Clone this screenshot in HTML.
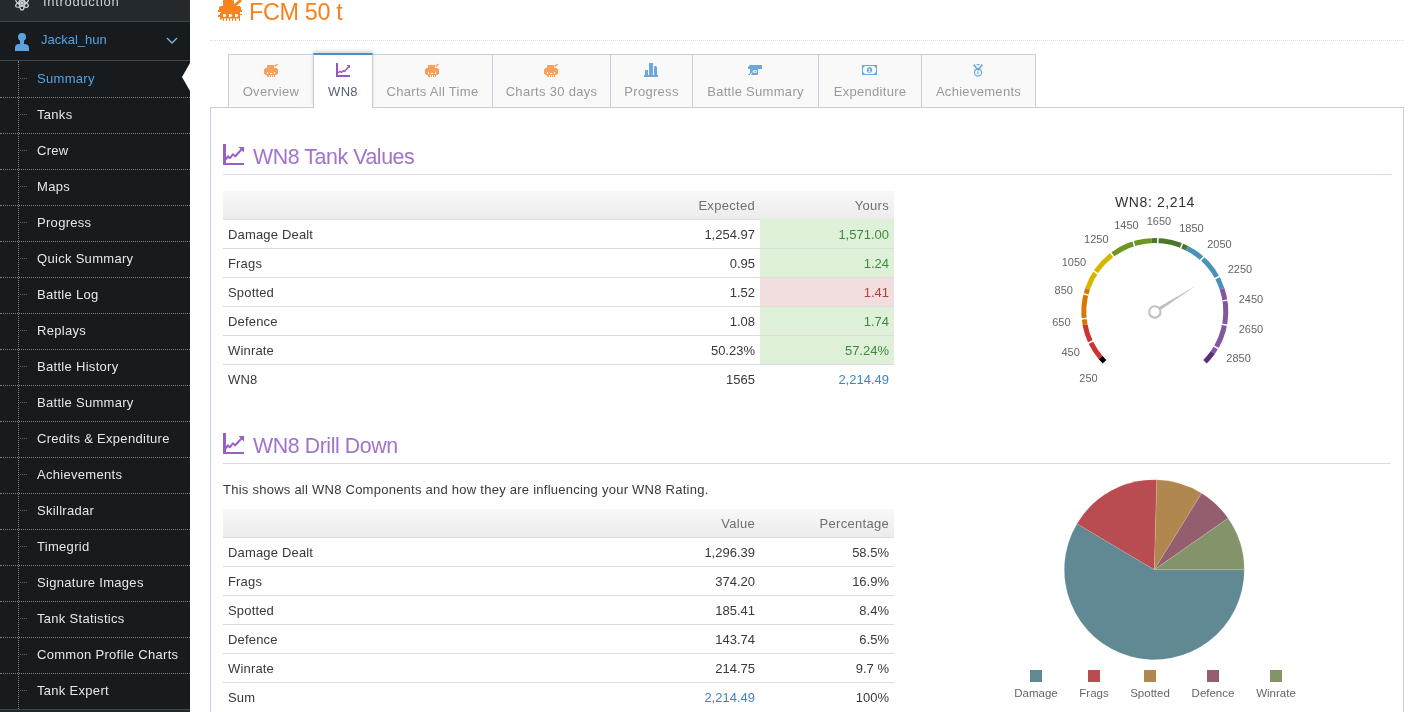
<!DOCTYPE html><html><head><meta charset="utf-8"><style>
*{box-sizing:border-box;margin:0;padding:0}
html,body{width:1422px;height:712px;overflow:hidden;background:#fff;font-family:"Liberation Sans",sans-serif;font-size:13px;color:#393939}
.t{position:absolute;white-space:nowrap;line-height:16px}
#sb{position:absolute;left:0;top:0;width:190px;height:712px;background:#171b1d;overflow:hidden}
#sb .t{color:#e6e6e6;letter-spacing:0.3px}
.sdot{position:absolute;left:0;width:190px;height:1px;border-top:1px dotted #74838a}
.tab{position:absolute;top:54px;height:54px;background:#f9f9f9;border:1px solid #c5d0dc;color:#999}
.tab .lbl{position:absolute;left:0;right:0;text-align:center;top:29px;line-height:16px;white-space:nowrap;letter-spacing:0.3px}

.tab.active{background:#fff;border-top:2px solid #4c8fbd;top:53px;height:55px;border-bottom:0;color:#576373;box-shadow:0 -2px 3px rgba(0,0,0,0.15);z-index:2}
.box{position:absolute;left:210px;top:107px;width:1194px;height:640px;border:1px solid #c5d0dc;background:#fff;z-index:1}
.z{z-index:3}
.hul{position:absolute;left:223px;width:1168px;height:1px;background:#e2d6ea;z-index:3}
.htxt{position:absolute;left:253px;font-size:21.4px;letter-spacing:-0.45px;color:#a173cb;white-space:nowrap;line-height:24px;z-index:3}
.th{position:absolute;left:223px;width:671px;height:29px;background:linear-gradient(#f8f8f8,#ececec);border-bottom:1px solid #ddd;z-index:3}
.rl{position:absolute;left:223px;width:671px;height:1px;background:#ddd;z-index:4}
.cell{position:absolute;z-index:3}
.r{text-align:right}
</style></head><body><div id="wrap" style="position:absolute;left:0;top:0;width:1422px;height:712px;overflow:hidden;will-change:transform">
<div id="sb">
<div style="position:absolute;left:0;top:0;width:190px;height:21px;background:#23292c"></div>
<div style="position:absolute;left:0;top:21px;width:190px;height:1px;background:#3b484d"></div>
<div style="position:absolute;left:0;top:60px;width:190px;height:1px;background:#3b484d"></div>
<div style="position:absolute;left:0;top:709px;width:190px;height:1px;background:#3b484d"></div>
<div style="position:absolute;left:0;top:710px;width:190px;height:2px;background:#22282b"></div>
<svg style="position:absolute;left:14px;top:-5px" width="16" height="16" viewBox="0 0 16 16"><g fill="none" stroke="#c9d1d6" stroke-width="1.4"><ellipse cx="8" cy="8" rx="7" ry="2.6" transform="rotate(90 8 8)"/><ellipse cx="8" cy="8" rx="7" ry="2.6" transform="rotate(30 8 8)"/><ellipse cx="8" cy="8" rx="7" ry="2.6" transform="rotate(-30 8 8)"/></g><rect x="6.3" y="6.3" width="3.4" height="3.4" fill="#c9d1d6"/></svg>
<div class="t" style="left:43px;top:-6px;color:#c9d1d6;letter-spacing:0.7px">Introduction</div>
<svg style="position:absolute;left:14px;top:33px" width="15" height="18" viewBox="0 0 15 18"><circle cx="8" cy="4" r="4" fill="#5aa3e0"/><rect x="6" y="7" width="4" height="4" fill="#5aa3e0"/><path d="M1 18 L1 15 Q1 11 5 11 L10 11 Q15 11 15 15 L15 18 Z" fill="#5aa3e0"/></svg>
<div class="t" style="left:41px;top:32px;color:#5aa3e0;letter-spacing:0">Jackal_hun</div>
<svg style="position:absolute;left:166px;top:37px" width="12" height="8" viewBox="0 0 12 8"><path d="M1 1 L6 6 L11 1" fill="none" stroke="#7db9ea" stroke-width="1.3"/></svg>
<div style="position:absolute;left:18px;top:61px;width:1px;height:648px;border-left:1px dotted #74838a"></div>
<div class="t" style="left:37px;top:71px;color:#5aa3e0">Summary</div>
<div style="position:absolute;left:20px;top:78px;width:7px;height:1px;border-top:1px dotted #59676d"></div>
<div class="t" style="left:37px;top:107px;color:#e6e6e6">Tanks</div>
<div style="position:absolute;left:20px;top:114px;width:7px;height:1px;border-top:1px dotted #59676d"></div>
<div class="sdot" style="top:97px"></div>
<div class="t" style="left:37px;top:143px;color:#e6e6e6">Crew</div>
<div style="position:absolute;left:20px;top:150px;width:7px;height:1px;border-top:1px dotted #59676d"></div>
<div class="sdot" style="top:133px"></div>
<div class="t" style="left:37px;top:179px;color:#e6e6e6">Maps</div>
<div style="position:absolute;left:20px;top:186px;width:7px;height:1px;border-top:1px dotted #59676d"></div>
<div class="sdot" style="top:169px"></div>
<div class="t" style="left:37px;top:215px;color:#e6e6e6">Progress</div>
<div style="position:absolute;left:20px;top:222px;width:7px;height:1px;border-top:1px dotted #59676d"></div>
<div class="sdot" style="top:205px"></div>
<div class="t" style="left:37px;top:251px;color:#e6e6e6">Quick Summary</div>
<div style="position:absolute;left:20px;top:258px;width:7px;height:1px;border-top:1px dotted #59676d"></div>
<div class="sdot" style="top:241px"></div>
<div class="t" style="left:37px;top:287px;color:#e6e6e6">Battle Log</div>
<div style="position:absolute;left:20px;top:294px;width:7px;height:1px;border-top:1px dotted #59676d"></div>
<div class="sdot" style="top:277px"></div>
<div class="t" style="left:37px;top:323px;color:#e6e6e6">Replays</div>
<div style="position:absolute;left:20px;top:330px;width:7px;height:1px;border-top:1px dotted #59676d"></div>
<div class="sdot" style="top:313px"></div>
<div class="t" style="left:37px;top:359px;color:#e6e6e6">Battle History</div>
<div style="position:absolute;left:20px;top:366px;width:7px;height:1px;border-top:1px dotted #59676d"></div>
<div class="sdot" style="top:349px"></div>
<div class="t" style="left:37px;top:395px;color:#e6e6e6">Battle Summary</div>
<div style="position:absolute;left:20px;top:402px;width:7px;height:1px;border-top:1px dotted #59676d"></div>
<div class="sdot" style="top:385px"></div>
<div class="t" style="left:37px;top:431px;color:#e6e6e6">Credits &amp; Expenditure</div>
<div style="position:absolute;left:20px;top:438px;width:7px;height:1px;border-top:1px dotted #59676d"></div>
<div class="sdot" style="top:421px"></div>
<div class="t" style="left:37px;top:467px;color:#e6e6e6">Achievements</div>
<div style="position:absolute;left:20px;top:474px;width:7px;height:1px;border-top:1px dotted #59676d"></div>
<div class="sdot" style="top:457px"></div>
<div class="t" style="left:37px;top:503px;color:#e6e6e6">Skillradar</div>
<div style="position:absolute;left:20px;top:510px;width:7px;height:1px;border-top:1px dotted #59676d"></div>
<div class="sdot" style="top:493px"></div>
<div class="t" style="left:37px;top:539px;color:#e6e6e6">Timegrid</div>
<div style="position:absolute;left:20px;top:546px;width:7px;height:1px;border-top:1px dotted #59676d"></div>
<div class="sdot" style="top:529px"></div>
<div class="t" style="left:37px;top:575px;color:#e6e6e6">Signature Images</div>
<div style="position:absolute;left:20px;top:582px;width:7px;height:1px;border-top:1px dotted #59676d"></div>
<div class="sdot" style="top:565px"></div>
<div class="t" style="left:37px;top:611px;color:#e6e6e6">Tank Statistics</div>
<div style="position:absolute;left:20px;top:618px;width:7px;height:1px;border-top:1px dotted #59676d"></div>
<div class="sdot" style="top:601px"></div>
<div class="t" style="left:37px;top:647px;color:#e6e6e6">Common Profile Charts</div>
<div style="position:absolute;left:20px;top:654px;width:7px;height:1px;border-top:1px dotted #59676d"></div>
<div class="sdot" style="top:637px"></div>
<div class="t" style="left:37px;top:683px;color:#e6e6e6">Tank Expert</div>
<div style="position:absolute;left:20px;top:690px;width:7px;height:1px;border-top:1px dotted #59676d"></div>
<div class="sdot" style="top:673px"></div>
</div>
<svg style="position:absolute;left:181px;top:62px;z-index:5" width="10" height="30" viewBox="0 0 10 30"><path d="M9 1 L1 15 L9 29 L10 29 L10 1 Z" fill="#fff"/></svg>
<svg style="position:absolute;left:218px;top:0px;overflow:visible" width="24" height="21" viewBox="0 0 24 21"><path fill="#f7841f" d="M5 -4h11v10h-11z M15 5L22 -1L24 1L17 7z M2 6h20v1h1v5h-1v1h-20v-1h-1v-5h1z M0 10h2v2h-2z M22 10h2v2h-2z M2 12h20v6.5h-20z M0 15h2v2h-2z M22 14h2v1h-2z M2 17h2v2.5h-2z M5 18h1v3h-1z M8 18h1v3h-1z M11 18h1v3h-1z M14 18h1v3h-1z M17 18h1v3h-1z M21 18h1v3h-1z"/><path fill="#fff" d="M5 14h2l1.5 1.5l-1.5 1.5h-2z M11 14h2l1.5 1.5l-1.5 1.5h-2z M17 14h2l1.5 1.5l-1.5 1.5h-2z M2 12h1v1h-1z M14 -1h3v1.3h-3z"/></svg>
<div class="t" style="left:249px;top:-2px;font-size:23.4px;letter-spacing:-0.35px;line-height:28px;color:#f8801d">FCM 50 t</div>
<div style="position:absolute;left:210px;top:40px;width:1194px;height:1px;border-top:1px dotted #e0e0e0"></div>
<div class="tab" style="left:228px;width:86px">
<div style="position:absolute;left:35.0px;top:8px;width:14px;height:8px;line-height:0"><svg width="14" height="14" viewBox="0 0 14 14"><path fill="#fba05a" d="M3 2h7v3h-7z M10 3L13 0.4L14 1.5L11 4z M1 5h12v1h1v5h-1v1h-12v-1h-1v-5h1z M3 12h2v2h-2z M6 12h1v2h-1z M8 12h1v2h-1z M10 12h1v2h-1z"/><path fill="#f9f9f9" d="M3 9h1v2h-1z M6 10h2v1h-2z M10 9h1v2h-1z"/></svg></div>
<div class="lbl" style="top:29px">Overview</div>
</div>
<div class="tab active" style="left:313px;width:60px">
<div style="position:absolute;left:22.0px;top:8px;width:14px;height:7px;line-height:0"><svg width="14" height="14" viewBox="0 0 14 14"><path fill="#9456c1" d="M0 0h2v12h12v2h-14z M10.5 2h3.5v3.5z"/><path fill="none" stroke="#9456c1" stroke-width="1.5" stroke-linejoin="bevel" d="M2 10L4 8.2L5.5 9.5L7.5 7.5L8.5 8.5L12.5 4"/></svg></div>
<div class="lbl" style="top:29px">WN8</div>
</div>
<div class="tab" style="left:372px;width:121px">
<div style="position:absolute;left:52.0px;top:8px;width:14px;height:8px;line-height:0"><svg width="14" height="14" viewBox="0 0 14 14"><path fill="#fba05a" d="M3 2h7v3h-7z M10 3L13 0.4L14 1.5L11 4z M1 5h12v1h1v5h-1v1h-12v-1h-1v-5h1z M3 12h2v2h-2z M6 12h1v2h-1z M8 12h1v2h-1z M10 12h1v2h-1z"/><path fill="#f9f9f9" d="M3 9h1v2h-1z M6 10h2v1h-2z M10 9h1v2h-1z"/></svg></div>
<div class="lbl" style="top:29px">Charts All Time</div>
</div>
<div class="tab" style="left:492px;width:119px">
<div style="position:absolute;left:51.0px;top:8px;width:14px;height:8px;line-height:0"><svg width="14" height="14" viewBox="0 0 14 14"><path fill="#fba05a" d="M3 2h7v3h-7z M10 3L13 0.4L14 1.5L11 4z M1 5h12v1h1v5h-1v1h-12v-1h-1v-5h1z M3 12h2v2h-2z M6 12h1v2h-1z M8 12h1v2h-1z M10 12h1v2h-1z"/><path fill="#f9f9f9" d="M3 9h1v2h-1z M6 10h2v1h-2z M10 9h1v2h-1z"/></svg></div>
<div class="lbl" style="top:29px">Charts 30 days</div>
</div>
<div class="tab" style="left:610px;width:83px">
<div style="position:absolute;left:33.0px;top:8px;width:14px;height:8px;line-height:0"><svg width="14" height="14" viewBox="0 0 14 14"><path fill="#6fa7d9" d="M0 12h14v2h-14z M1 7h3v5h-3z M5 0h4v12h-4z M10 3h2.2v0.8h0.8v8.2h-3z"/></svg></div>
<div class="lbl" style="top:29px">Progress</div>
</div>
<div class="tab" style="left:692px;width:127px">
<div style="position:absolute;left:55.0px;top:10px;width:14px;height:10px;line-height:0"><svg width="14" height="10" viewBox="0 0 14 10"><path fill="#6fa7d9" d="M0 2L2 0H14V4H10V9.2L9.2 10H3.5L2.5 9L2.2 10H0L2 8V4H0Z"/><path fill="none" stroke="#f9f9f9" stroke-width="0.9" d="M2.2 10L4.2 7.5"/><path fill="#f9f9f9" d="M4.5 6.5L5.6 5.2H8.8V7.8H5.6Z"/><circle cx="7.3" cy="6.5" r="0.8" fill="#6fa7d9"/></svg></div>
<div class="lbl" style="top:29px">Battle Summary</div>
</div>
<div class="tab" style="left:818px;width:104px">
<div style="position:absolute;left:43.0px;top:10px;width:15px;height:10px;line-height:0"><svg width="15" height="10" viewBox="0 0 15 10"><path fill="#6fa7d9" d="M0 0h15v10h-15z"/><path fill="#f9f9f9" d="M3 1H12L14 3V7L12 9H3L1 7V3Z"/><ellipse cx="7.5" cy="5" rx="2.6" ry="3" fill="#6fa7d9"/><path fill="#f9f9f9" d="M6.2 3.5h1.8v3h0.8v0.8h-2.6v-0.8h0.8v-2.2h-0.8z"/></svg></div>
<div class="lbl" style="top:29px">Expenditure</div>
</div>
<div class="tab" style="left:921px;width:115px">
<div style="position:absolute;left:51.0px;top:9px;width:10px;height:13px;line-height:0"><svg width="10" height="13" viewBox="0 0 10 13"><path fill="#6fa7d9" d="M0 1.2L1.2 0L5 4.6L8.8 0L10 1.2L5.6 6.4H4.4Z M3 0H7L5 1.8Z"/><circle cx="5" cy="8.6" r="3.5" fill="none" stroke="#6fa7d9" stroke-width="1.1"/><path fill="#6fa7d9" d="M4.2 7.2h1.2v3h-1.2z"/></svg></div>
<div class="lbl" style="top:29px">Achievements</div>
</div>
<div class="box"></div>
<svg style="position:absolute;left:223px;top:144px;z-index:3" width="21" height="21" viewBox="0 0 21 21"><path fill="#9a5fc5" d="M0 0h3v19h18v2h-21z M15.5 3h5.5v5.5z"/><path fill="none" stroke="#9a5fc5" stroke-width="2" stroke-linejoin="bevel" d="M3 15.5L5 12L6.8 14.5L10 10L12 12.5L18.5 5.5"/></svg>
<div class="htxt" style="top:145px">WN8 Tank Values</div>
<div class="hul" style="top:174px"></div>
<svg style="position:absolute;left:223px;top:433px;z-index:3" width="21" height="21" viewBox="0 0 21 21"><path fill="#9a5fc5" d="M0 0h3v19h18v2h-21z M15.5 3h5.5v5.5z"/><path fill="none" stroke="#9a5fc5" stroke-width="2" stroke-linejoin="bevel" d="M3 15.5L5 12L6.8 14.5L10 10L12 12.5L18.5 5.5"/></svg>
<div class="htxt" style="top:434px">WN8 Drill Down</div>
<div class="hul" style="top:463px"></div>
<div class="th" style="top:191px"></div>
<div class="t z r" style="left:560px;width:195px;top:198px;color:#707070;letter-spacing:0.3px;margin-right:-0.3px">Expected</div>
<div class="t z r" style="left:760px;width:129px;top:198px;color:#707070;letter-spacing:0.3px;margin-right:-0.3px">Yours</div>
<div class="cell" style="left:760px;top:219px;width:134px;height:29px;background:#dff0d8"></div>
<div class="t z" style="left:228px;top:227px;letter-spacing:0.17px">Damage Dealt</div>
<div class="t z r" style="left:560px;width:195px;top:227px;color:#393939">1,254.97</div>
<div class="t z r" style="left:760px;width:129px;top:227px;color:#3d8b3d">1,571.00</div>
<div class="cell" style="left:760px;top:248px;width:134px;height:29px;background:#dff0d8"></div>
<div class="rl" style="top:248px"></div>
<div class="t z" style="left:228px;top:256px;letter-spacing:0.17px">Frags</div>
<div class="t z r" style="left:560px;width:195px;top:256px;color:#393939">0.95</div>
<div class="t z r" style="left:760px;width:129px;top:256px;color:#3d8b3d">1.24</div>
<div class="cell" style="left:760px;top:277px;width:134px;height:29px;background:#f2dede"></div>
<div class="rl" style="top:277px"></div>
<div class="t z" style="left:228px;top:285px;letter-spacing:0.17px">Spotted</div>
<div class="t z r" style="left:560px;width:195px;top:285px;color:#393939">1.52</div>
<div class="t z r" style="left:760px;width:129px;top:285px;color:#b7403e">1.41</div>
<div class="cell" style="left:760px;top:306px;width:134px;height:29px;background:#dff0d8"></div>
<div class="rl" style="top:306px"></div>
<div class="t z" style="left:228px;top:314px;letter-spacing:0.17px">Defence</div>
<div class="t z r" style="left:560px;width:195px;top:314px;color:#393939">1.08</div>
<div class="t z r" style="left:760px;width:129px;top:314px;color:#3d8b3d">1.74</div>
<div class="cell" style="left:760px;top:335px;width:134px;height:29px;background:#dff0d8"></div>
<div class="rl" style="top:335px"></div>
<div class="t z" style="left:228px;top:343px;letter-spacing:0.17px">Winrate</div>
<div class="t z r" style="left:560px;width:195px;top:343px;color:#393939">50.23%</div>
<div class="t z r" style="left:760px;width:129px;top:343px;color:#3d8b3d">57.24%</div>
<div class="rl" style="top:364px"></div>
<div class="t z" style="left:228px;top:372px;letter-spacing:0.17px">WN8</div>
<div class="t z r" style="left:560px;width:195px;top:372px;color:#393939">1565</div>
<div class="t z r" style="left:760px;width:129px;top:372px;color:#3a87c0">2,214.49</div>
<div class="t z" style="left:223px;top:482px;letter-spacing:0.25px">This shows all WN8 Components and how they are influencing your WN8 Rating.</div>
<div class="th" style="top:509px"></div>
<div class="t z r" style="left:560px;width:195px;top:516px;color:#707070;letter-spacing:0.3px;margin-right:-0.3px">Value</div>
<div class="t z r" style="left:760px;width:129px;top:516px;color:#707070;letter-spacing:0.3px;margin-right:-0.3px">Percentage</div>
<div class="t z" style="left:228px;top:545px;letter-spacing:0.17px">Damage Dealt</div>
<div class="t z r" style="left:560px;width:195px;top:545px;color:#393939">1,296.39</div>
<div class="t z r" style="left:760px;width:129px;top:545px;color:#393939">58.5%</div>
<div class="rl" style="top:566px"></div>
<div class="t z" style="left:228px;top:574px;letter-spacing:0.17px">Frags</div>
<div class="t z r" style="left:560px;width:195px;top:574px;color:#393939">374.20</div>
<div class="t z r" style="left:760px;width:129px;top:574px;color:#393939">16.9%</div>
<div class="rl" style="top:595px"></div>
<div class="t z" style="left:228px;top:603px;letter-spacing:0.17px">Spotted</div>
<div class="t z r" style="left:560px;width:195px;top:603px;color:#393939">185.41</div>
<div class="t z r" style="left:760px;width:129px;top:603px;color:#393939">8.4%</div>
<div class="rl" style="top:624px"></div>
<div class="t z" style="left:228px;top:632px;letter-spacing:0.17px">Defence</div>
<div class="t z r" style="left:560px;width:195px;top:632px;color:#393939">143.74</div>
<div class="t z r" style="left:760px;width:129px;top:632px;color:#393939">6.5%</div>
<div class="rl" style="top:653px"></div>
<div class="t z" style="left:228px;top:661px;letter-spacing:0.17px">Winrate</div>
<div class="t z r" style="left:560px;width:195px;top:661px;color:#393939">214.75</div>
<div class="t z r" style="left:760px;width:129px;top:661px;color:#393939">9.7 %</div>
<div class="rl" style="top:682px"></div>
<div class="t z" style="left:228px;top:690px;letter-spacing:0.17px">Sum</div>
<div class="t z r" style="left:560px;width:195px;top:690px;color:#3a87c0">2,214.49</div>
<div class="t z r" style="left:760px;width:129px;top:690px;color:#393939">100%</div>
<svg style="position:absolute;left:0;top:0;z-index:3" width="1422" height="712"><path d="M1104.60 361.80 A71 71 0 0 1 1100.48 357.32" fill="none" stroke="#000000" stroke-width="5"/><path d="M1100.48 357.32 A71 71 0 0 1 1085.02 324.70" fill="none" stroke="#cd3333" stroke-width="5"/><path d="M1085.02 324.70 A71 71 0 0 1 1087.60 288.70" fill="none" stroke="#d77900" stroke-width="5"/><path d="M1087.60 288.70 A71 71 0 0 1 1112.25 254.76" fill="none" stroke="#d7b600" stroke-width="5"/><path d="M1112.25 254.76 A71 71 0 0 1 1151.76 240.67" fill="none" stroke="#6d9521" stroke-width="5"/><path d="M1151.76 240.67 A71 71 0 0 1 1187.03 248.34" fill="none" stroke="#4c762e" stroke-width="5"/><path d="M1187.03 248.34 A71 71 0 0 1 1222.00 288.70" fill="none" stroke="#4a92b7" stroke-width="5"/><path d="M1222.00 288.70 A71 71 0 0 1 1212.83 352.51" fill="none" stroke="#83579d" stroke-width="5"/><path d="M1212.83 352.51 A71 71 0 0 1 1205.00 361.80" fill="none" stroke="#5a3175" stroke-width="5"/><line x1="1094.26" y1="340.30" x2="1087.03" y2="343.73" stroke="#fff" stroke-width="1.5"/><line x1="1088.13" y1="318.29" x2="1080.17" y2="319.08" stroke="#fff" stroke-width="1.5"/><line x1="1089.76" y1="295.49" x2="1082.00" y2="293.57" stroke="#fff" stroke-width="1.5"/><line x1="1098.96" y1="274.58" x2="1092.29" y2="270.16" stroke="#fff" stroke-width="1.5"/><line x1="1114.65" y1="257.96" x2="1109.85" y2="251.56" stroke="#fff" stroke-width="1.5"/><line x1="1135.01" y1="247.59" x2="1132.64" y2="239.95" stroke="#fff" stroke-width="1.5"/><line x1="1157.67" y1="244.66" x2="1158.01" y2="236.67" stroke="#fff" stroke-width="1.5"/><line x1="1180.00" y1="249.52" x2="1183.01" y2="242.11" stroke="#fff" stroke-width="1.5"/><line x1="1199.39" y1="261.60" x2="1204.72" y2="255.63" stroke="#fff" stroke-width="1.5"/><line x1="1213.60" y1="279.49" x2="1220.63" y2="275.66" stroke="#fff" stroke-width="1.5"/><line x1="1220.98" y1="301.12" x2="1228.88" y2="299.87" stroke="#fff" stroke-width="1.5"/><line x1="1220.65" y1="323.97" x2="1228.51" y2="325.44" stroke="#fff" stroke-width="1.5"/><line x1="1212.66" y1="345.38" x2="1219.57" y2="349.41" stroke="#fff" stroke-width="1.5"/><path d="M1153.79 309.99 L1196.30 285.54 L1155.81 313.21 Z" fill="#c0c0c0"/><circle cx="1154.80" cy="311.90" r="5.7" fill="#fff" stroke="#c0c0c0" stroke-width="2.1"/><text x="1088.5" y="381.5" text-anchor="middle" font-family="Liberation Sans" font-size="11" fill="#666">250</text><text x="1070.6" y="355.7" text-anchor="middle" font-family="Liberation Sans" font-size="11" fill="#666">450</text><text x="1061.4" y="325.6" text-anchor="middle" font-family="Liberation Sans" font-size="11" fill="#666">650</text><text x="1063.7" y="294.2" text-anchor="middle" font-family="Liberation Sans" font-size="11" fill="#666">850</text><text x="1074.0" y="266.0" text-anchor="middle" font-family="Liberation Sans" font-size="11" fill="#666">1050</text><text x="1096.3" y="242.7" text-anchor="middle" font-family="Liberation Sans" font-size="11" fill="#666">1250</text><text x="1126.5" y="228.5" text-anchor="middle" font-family="Liberation Sans" font-size="11" fill="#666">1450</text><text x="1159.0" y="224.6" text-anchor="middle" font-family="Liberation Sans" font-size="11" fill="#666">1650</text><text x="1191.4" y="231.6" text-anchor="middle" font-family="Liberation Sans" font-size="11" fill="#666">1850</text><text x="1219.5" y="248.0" text-anchor="middle" font-family="Liberation Sans" font-size="11" fill="#666">2050</text><text x="1240.0" y="272.5" text-anchor="middle" font-family="Liberation Sans" font-size="11" fill="#666">2250</text><text x="1251.0" y="302.8" text-anchor="middle" font-family="Liberation Sans" font-size="11" fill="#666">2450</text><text x="1251.0" y="333.0" text-anchor="middle" font-family="Liberation Sans" font-size="11" fill="#666">2650</text><text x="1238.6" y="362.2" text-anchor="middle" font-family="Liberation Sans" font-size="11" fill="#666">2850</text><text x="1155" y="206.5" text-anchor="middle" font-family="Liberation Sans" font-size="14" letter-spacing="0.6" fill="#333">WN8: 2,214</text><path d="M1154.30 569.70 L1244.30 569.70 A90 90 0 1 1 1076.95 523.69 Z" fill="#608993" stroke="#fff" stroke-width="0.5" stroke-opacity="0.25"/><path d="M1154.30 569.70 L1076.95 523.69 A90 90 0 0 1 1156.78 479.73 Z" fill="#b84c50" stroke="#fff" stroke-width="0.5" stroke-opacity="0.25"/><path d="M1154.30 569.70 L1156.78 479.73 A90 90 0 0 1 1201.62 493.15 Z" fill="#b0884f" stroke="#fff" stroke-width="0.5" stroke-opacity="0.25"/><path d="M1154.30 569.70 L1201.62 493.15 A90 90 0 0 1 1228.10 518.19 Z" fill="#955e6f" stroke="#fff" stroke-width="0.5" stroke-opacity="0.25"/><path d="M1154.30 569.70 L1228.10 518.19 A90 90 0 0 1 1244.30 569.70 Z" fill="#84946a" stroke="#fff" stroke-width="0.5" stroke-opacity="0.25"/><rect x="1030" y="670" width="12" height="12" fill="#608993"/><text x="1036" y="697" text-anchor="middle" font-family="Liberation Sans" font-size="11.5" fill="#666">Damage</text><rect x="1088" y="670" width="12" height="12" fill="#b84c50"/><text x="1094" y="697" text-anchor="middle" font-family="Liberation Sans" font-size="11.5" fill="#666">Frags</text><rect x="1144" y="670" width="12" height="12" fill="#b0884f"/><text x="1150" y="697" text-anchor="middle" font-family="Liberation Sans" font-size="11.5" fill="#666">Spotted</text><rect x="1207" y="670" width="12" height="12" fill="#955e6f"/><text x="1213" y="697" text-anchor="middle" font-family="Liberation Sans" font-size="11.5" fill="#666">Defence</text><rect x="1270" y="670" width="12" height="12" fill="#84946a"/><text x="1276" y="697" text-anchor="middle" font-family="Liberation Sans" font-size="11.5" fill="#666">Winrate</text></svg>
</div></body></html>
